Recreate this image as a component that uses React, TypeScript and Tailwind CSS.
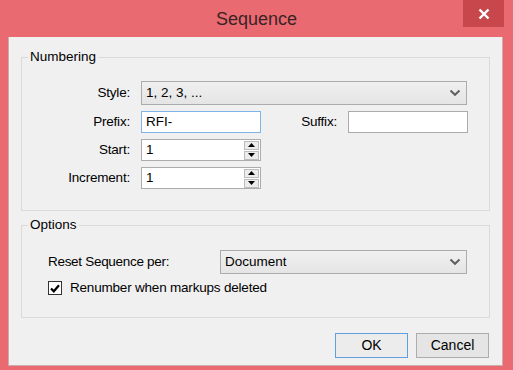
import React from 'react';

const font = { fontFamily: '"Liberation Sans", Arial, sans-serif' };

const Chevron = () => (
  <svg width="12" height="8" viewBox="0 0 12 8" className="shrink-0">
    <path d="M1.5 1.5 L6 5.8 L10.5 1.5" fill="none" stroke="#606060" strokeWidth="2" />
  </svg>
);

const Select = ({ value, width }: { value: string; width: string }) => (
  <div
    className={`${width} h-[24px] flex items-center justify-between pl-[4px] pr-[5px] border border-[#acacac] bg-gradient-to-b from-[#f0f0f0] to-[#e5e5e5] text-black`}
  >
    <span>{value}</span>
    <Chevron />
  </div>
);

const Spin = () => (
  <div className="flex flex-col gap-[1px] mr-[1px]">
    <div className="w-[15px] h-[9px] border border-[#bcbcbc] bg-[#ececec] flex items-center justify-center">
      <svg width="7" height="4" viewBox="0 0 7 4">
        <path d="M0 4 L3.5 0 L7 4 Z" fill="#000" />
      </svg>
    </div>
    <div className="w-[15px] h-[9px] border border-[#bcbcbc] bg-[#ececec] flex items-center justify-center">
      <svg width="7" height="4" viewBox="0 0 7 4">
        <path d="M0 0 L7 0 L3.5 4 Z" fill="#000" />
      </svg>
    </div>
  </div>
);

const Label = ({ children }: { children: React.ReactNode }) => (
  <div className="w-[108px] text-right tracking-[-0.2px] shrink-0">{children}</div>
);

export default function App() {
  return (
    <div className="w-[513px] h-[370px] bg-[#e96a70] overflow-hidden text-[13.5px] text-black" style={font}>
      <div className="h-[37px] grid grid-cols-[1fr_auto_1fr]">
        <div />
        <div className="text-[18px] text-[#3a2326] pt-[8px] leading-[22px]">Sequence</div>
        <div className="flex justify-end">
          <div className="w-[41px] h-[27px] mr-[9px] bg-[#c8474d] flex items-center justify-center">
            <svg width="12" height="12" viewBox="0 0 12 12">
              <path d="M1.5 1.5 L10.5 10.5 M10.5 1.5 L1.5 10.5" stroke="#fff" strokeWidth="2.4" />
            </svg>
          </div>
        </div>
      </div>

      <div className="ml-[8px] w-[495px] h-[329px] bg-[#f0f0f0] border-l border-b border-r border-[#cfa9ab] flex flex-col">
        <fieldset className="ml-[12px] mr-[12px] mt-[11px] border border-[#dadada] px-0 pb-[21px]">
          <legend className="ml-[6px] px-[2px] leading-[18px]">Numbering</legend>
          <div className="mt-[15px] flex flex-col gap-[6px]">
            <div className="flex items-center gap-[11px]">
              <Label>Style:</Label>
              <Select value="1, 2, 3, ..." width="w-[326px]" />
            </div>
            <div className="flex items-center gap-[11px]">
              <Label>Prefix:</Label>
              <div className="w-[120px] h-[22px] border border-[#7eb4ea] bg-white flex items-center pl-[4px]">RFI-</div>
              <div className="w-[65px] text-right tracking-[-0.2px]">Suffix:</div>
              <div className="w-[120px] h-[22px] border border-[#acacac] bg-white" />
            </div>
            <div className="flex items-center gap-[11px]">
              <Label>Start:</Label>
              <div className="w-[120px] h-[22px] border border-[#acacac] bg-white flex items-center justify-between pl-[4px]">
                <span>1</span>
                <Spin />
              </div>
            </div>
            <div className="flex items-center gap-[11px]">
              <Label>Increment:</Label>
              <div className="w-[120px] h-[22px] border border-[#acacac] bg-white flex items-center justify-between pl-[4px]">
                <span>1</span>
                <Spin />
              </div>
            </div>
          </div>
        </fieldset>

        <fieldset className="ml-[12px] mr-[12px] mt-[5px] border border-[#dadada] px-0 pb-[19px]">
          <legend className="ml-[6px] px-[2px] leading-[18px]">Options</legend>
          <div className="mt-[16px] pl-[26px] flex flex-col gap-[4px]">
            <div className="flex items-center">
              <div className="w-[172px] tracking-[-0.3px]">Reset Sequence per:</div>
              <Select value="Document" width="w-[247px]" />
            </div>
            <div className="flex items-center gap-[8px]">
              <div className="w-[14px] h-[14px] border border-[#333] bg-white flex items-center justify-center">
                <svg width="10" height="9" viewBox="0 0 10 9">
                  <path d="M1 4.5 L3.8 7.3 L9 1.2" fill="none" stroke="#000" strokeWidth="2.2" />
                </svg>
              </div>
              <span className="tracking-[-0.2px]">Renumber when markups deleted</span>
            </div>
          </div>
        </fieldset>

        <div className="mt-[15px] mr-[13px] flex justify-end gap-[8px]">
          <button className="w-[73px] h-[25px] border border-[#5fa0e0] bg-[#ececec] text-[14px]">OK</button>
          <button className="w-[73px] h-[25px] border border-[#adadad] bg-[#e5e5e5] text-[14px]">Cancel</button>
        </div>
      </div>
    </div>
  );
}
